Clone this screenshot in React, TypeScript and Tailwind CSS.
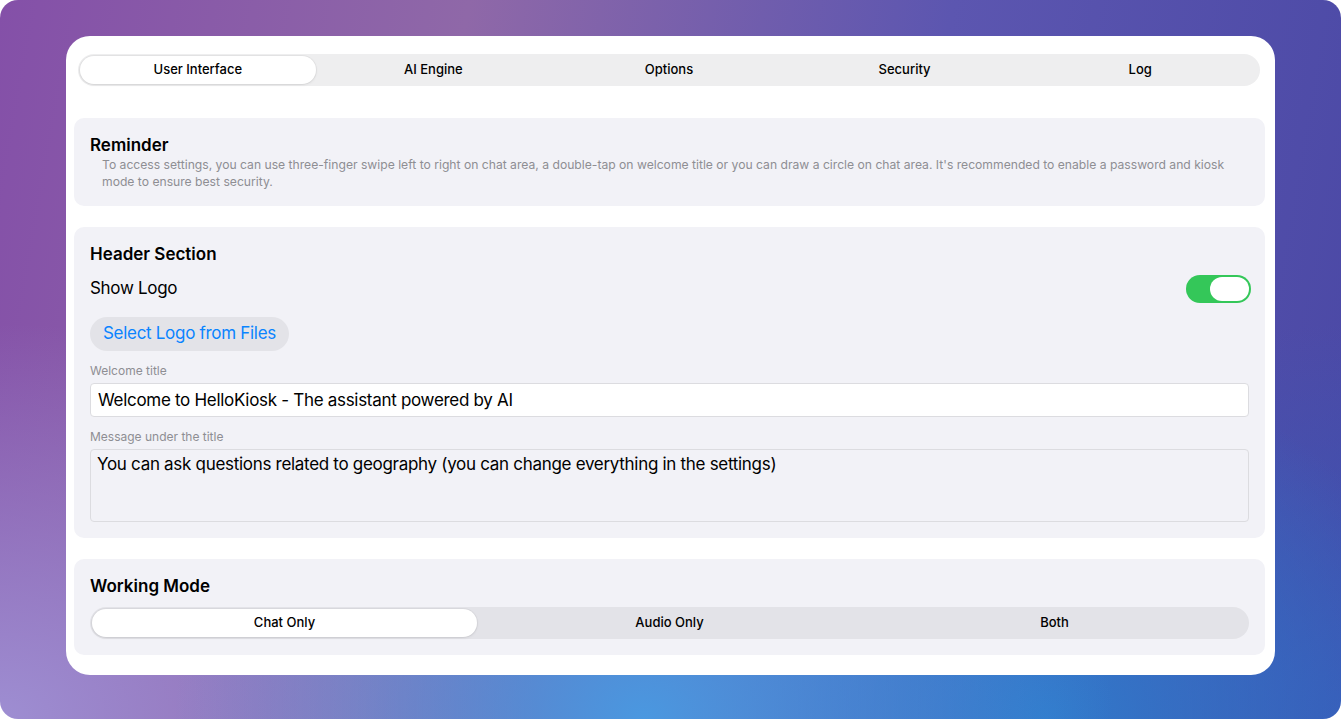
import React, { useState } from "react";

const tabs = ["User Interface", "AI Engine", "Options", "Security", "Log"];
const modes = ["Chat Only", "Audio Only", "Both"];

function Section({ title, children }: { title: string; children?: React.ReactNode }) {
  return (
    <div className="rounded-[10px] bg-[#f2f2f7] px-4 pb-4 pt-4">
      <h2 className="text-[17px] font-semibold leading-[22px] text-black">{title}</h2>
      {children}
    </div>
  );
}

function Segmented({
  items,
  active,
  onChange,
  className,
}: {
  items: string[];
  active: number;
  onChange: (i: number) => void;
  className: string;
}) {
  return (
    <div className={`flex h-[32px] rounded-full p-[2px] ${className}`}>
      {items.map((t, i) => (
        <button
          key={t}
          type="button"
          onClick={() => onChange(i)}
          className={`flex-1 rounded-full text-[13px] font-medium text-black ${
            active === i ? "bg-white shadow-[0_0_0_1px_rgba(0,0,0,0.04),0_1px_3px_rgba(0,0,0,0.08)]" : ""
          }`}
        >
          {t}
        </button>
      ))}
    </div>
  );
}

export default function App() {
  const [tab, setTab] = useState(0);
  const [mode, setMode] = useState(0);
  const [showLogo, setShowLogo] = useState(true);

  return (
    <div className="h-[719px] w-[1341px] bg-white font-['Inter','Noto_Sans',sans-serif]">
      <div className="flex h-full w-full items-start justify-center overflow-hidden rounded-[18px] pt-[36px] bg-[radial-gradient(ellipse_35%_55%_at_48%_100%,#4a98e0_0%,rgba(74,152,224,0)_100%),radial-gradient(ellipse_30%_50%_at_78%_100%,#2f7acb_0%,rgba(47,122,203,0)_100%),radial-gradient(ellipse_40%_55%_at_0%_100%,#9e8ed2_0%,rgba(158,142,210,0)_100%),radial-gradient(ellipse_30%_55%_at_100%_100%,#3a58b6_0%,rgba(58,88,182,0)_100%),linear-gradient(100deg,#8450a8_0%,#8f68a8_32%,#5c56b0_65%,#4a48a5_100%)]">
        <div className="flex w-[1209px] flex-col rounded-[24px] bg-white pb-5 pl-2 pr-[10px] pt-[18px]">
          <Segmented
            items={tabs}
            active={tab}
            onChange={setTab}
            className="ml-1 mr-[5px] bg-[#eeeeef]"
          />

          <div className="mt-[32px] flex flex-col gap-[21px]">
            <Section title="Reminder">
              <p className="pl-3 pr-3 text-[12.15px] leading-[17px] text-[#8e8e93]">
                To access settings, you can use three-finger swipe left to right on chat area, a double-tap on welcome title or you can draw a circle on chat area. It's recommended to enable a password and kiosk mode to ensure best security.
              </p>
            </Section>

            <Section title="Header Section">
              <div className="mt-[10px] flex items-center justify-between">
                <span className="text-[17px] tracking-[-0.3px] text-black">Show Logo</span>
                <button
                  type="button"
                  onClick={() => setShowLogo(!showLogo)}
                  className={`-mr-[2px] flex h-[28px] w-[65px] items-center rounded-full p-[2px] ${
                    showLogo ? "justify-end bg-[#34c759]" : "justify-start bg-[#e3e3e8]"
                  }`}
                >
                  <span className="h-[24px] w-[39px] rounded-full bg-white" />
                </button>
              </div>
              <button
                type="button"
                className="mt-[14px] h-[34px] rounded-full bg-[#e3e3e8] px-[13px] text-[17px] tracking-[-0.3px] text-[#0a84ff]"
              >
                Select Logo from Files
              </button>
              <div className="mt-[12px] text-[12px] leading-[16px] text-[#8e8e93]">Welcome title</div>
              <input
                className="mt-[4px] h-[34px] w-full rounded-[4px] border border-[#dcdce0] bg-white px-[7px] text-[17px] tracking-[-0.3px] text-black outline-none"
                defaultValue="Welcome to HelloKiosk - The assistant powered by AI"
              />
              <div className="mt-[12px] text-[12px] leading-[16px] text-[#8e8e93]">Message under the title</div>
              <textarea
                className="mt-[4px] block h-[73px] w-full resize-none rounded-[4px] border border-[#dcdce0] bg-[#f2f2f7] px-[6px] py-[2px] text-[17px] leading-[24px] tracking-[-0.3px] text-black outline-none"
                defaultValue="You can ask questions related to geography (you can change everything in the settings)"
              />
            </Section>

            <Section title="Working Mode">
              <Segmented
                items={modes}
                active={mode}
                onChange={setMode}
                className="mt-[10px] bg-[#e3e3e8]"
              />
            </Section>
          </div>
        </div>
      </div>
    </div>
  );
}
